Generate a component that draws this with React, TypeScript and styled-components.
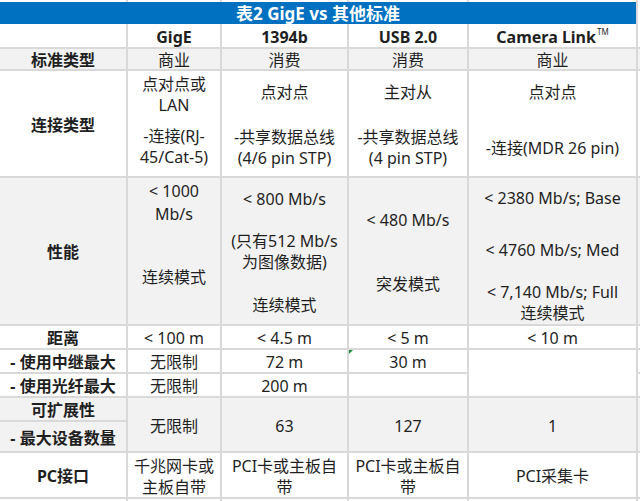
import React from "react";
import styled, {createGlobalStyle, css} from "styled-components";

const GlobalStyle = createGlobalStyle`
  html, body {
    margin: 0;
    padding: 0;
    background: #fff;
  }
  body {
    font-family: "Noto Sans", "Noto Sans CJK SC", sans-serif;
    color: #1f1f1f;
  }
`;

const LINE = "#d9d9d9";
const GRAY = "#f2f2f2";

type V = "top" | "center" | "bottom";

const Sheet = styled.div`
  display: grid;
  width: 640px;
  grid-template-columns: 128px 94px 127px 120px 169px 2px;
  grid-template-rows: 2px 22px 25px 22px 107px 148px 24px 24px 24px 24px 31px 46px 2px;
  overflow: hidden;
`;

const Cell = styled.div<{
  $gray?: boolean;
  $v?: V;
  $bold?: boolean;
  $rows?: number;
  $edge?: boolean;
  $tail?: boolean;
  $flag?: boolean;
}>`
  position: relative;
  box-sizing: border-box;
  display: flex;
  flex-direction: column;
  align-items: center;
  justify-content: ${p => (p.$v === "top" ? "flex-start" : p.$v === "bottom" ? "flex-end" : "center")};
  padding: ${p => (p.$edge ? "0" : "3px 0 0")};
  min-width: 0;
  background: ${p => (p.$gray ? GRAY : "#fff")};
  border-right: ${p => (p.$tail ? "none" : `2px solid ${LINE}`)};
  border-bottom: ${p => (p.$edge ? "none" : `2px solid ${LINE}`)};
  font-size: 16px;
  line-height: 21px;
  font-weight: ${p => (p.$bold ? 700 : 400)};
  white-space: nowrap;
  text-align: center;
  grid-row: span ${p => p.$rows ?? 1};

  ${p =>
    p.$flag &&
    css`
      &::before {
        content: "";
        position: absolute;
        left: 0;
        top: 0;
        border-top: 4px solid #1b8a3a;
        border-right: 4px solid transparent;
      }
    `}
`;

const Title = styled.div`
  grid-column: span 5;
  box-sizing: border-box;
  display: flex;
  align-items: center;
  justify-content: center;
  background: #0070c0;
  border-right: 2px solid ${LINE};
  color: #fff;
  font-size: 17px;
  font-weight: 700;
  line-height: 22px;
  padding-top: 1px;
`;

const Tm = styled.sup`
  font-size: 8px;
  line-height: 0;
  vertical-align: 8px;
  margin-left: 1px;
  font-weight: 400;
`;

const Line = styled.div`
  flex: none;
`;

const Gap = styled.div<{$h: number}>`
  flex: none;
  height: ${p => p.$h}px;
`;

function Stack({items}: {items: (string | number)[]}) {
  return (
    <>
      {items.map((it, i) =>
        typeof it === "number" ? <Gap key={i} $h={it}/> : <Line key={i}>{it}</Line>
      )}
    </>
  );
}

function Edge() {
  return (
    <>
      {[0, 1, 2, 3, 4].map(i => <Cell key={i} $edge/>)}
      <Cell $edge $tail/>
    </>
  );
}

export default function App() {
  return (
    <>
      <GlobalStyle/>
      <Sheet>
        <Edge/>

        <Title>表2 GigE vs 其他标准</Title>
        <Cell $edge $tail/>

        <Cell/>
        <Cell $bold>GigE</Cell>
        <Cell $bold>1394b</Cell>
        <Cell $bold>USB 2.0</Cell>
        <Cell $bold>
          <Line>Camera Link<Tm>TM</Tm></Line>
        </Cell>
        <Cell $tail/>

        <Cell $gray $bold>标准类型</Cell>
        <Cell $gray>商业</Cell>
        <Cell $gray>消费</Cell>
        <Cell $gray>消费</Cell>
        <Cell $gray>商业</Cell>
        <Cell $gray $tail/>

        <Cell $bold>连接类型</Cell>
        <Cell $v="top">
          <Stack items={["点对点或", "LAN", 10, "-连接(RJ-", "45/Cat-5)"]}/>
        </Cell>
        <Cell>
          <Stack items={["点对点", 24, "-共享数据总线", "(4/6 pin STP)"]}/>
        </Cell>
        <Cell>
          <Stack items={["主对从", 24, "-共享数据总线", "(4 pin STP)"]}/>
        </Cell>
        <Cell>
          <Stack items={["点对点", 35, "-连接(MDR 26 pin)", 9]}/>
        </Cell>
        <Cell $tail/>

        <Cell $gray $bold>性能</Cell>
        <Cell $gray $v="top">
          <Stack items={["< 1000", 2, "Mb/s", 42, "连续模式"]}/>
        </Cell>
        <Cell $gray>
          <Stack items={["< 800 Mb/s", 21, "(只有512 Mb/s", "为图像数据)", 22, "连续模式"]}/>
        </Cell>
        <Cell $gray>
          <Stack items={["< 480 Mb/s", 43, "突发模式"]}/>
        </Cell>
        <Cell $gray $v="bottom">
          <Stack items={["< 2380 Mb/s; Base", 31, "< 4760 Mb/s; Med", 21, "< 7,140 Mb/s; Full", "连续模式"]}/>
        </Cell>
        <Cell $gray $tail/>

        <Cell $bold>距离</Cell>
        <Cell>&lt; 100 m</Cell>
        <Cell>&lt; 4.5 m</Cell>
        <Cell>&lt; 5 m</Cell>
        <Cell>&lt; 10 m</Cell>
        <Cell $tail/>

        <Cell $bold>- 使用中继最大</Cell>
        <Cell>无限制</Cell>
        <Cell>72 m</Cell>
        <Cell $flag>30 m</Cell>
        <Cell $rows={2}/>
        <Cell $tail/>

        <Cell $bold>- 使用光纤最大</Cell>
        <Cell>无限制</Cell>
        <Cell>200 m</Cell>
        <Cell/>
        <Cell $tail/>

        <Cell $gray $bold>可扩展性</Cell>
        <Cell $gray $rows={2}>无限制</Cell>
        <Cell $gray $rows={2}>63</Cell>
        <Cell $gray $rows={2}>127</Cell>
        <Cell $gray $rows={2}>1</Cell>
        <Cell $gray $rows={2} $tail/>
        <Cell $gray $bold>- 最大设备数量</Cell>

        <Cell $bold>PC接口</Cell>
        <Cell>
          <Stack items={["千兆网卡或", "主板自带"]}/>
        </Cell>
        <Cell>
          <Stack items={["PCI卡或主板自", "带"]}/>
        </Cell>
        <Cell>
          <Stack items={["PCI卡或主板自", "带"]}/>
        </Cell>
        <Cell>PCI采集卡</Cell>
        <Cell $tail/>

        <Edge/>
      </Sheet>
    </>
  );
}
